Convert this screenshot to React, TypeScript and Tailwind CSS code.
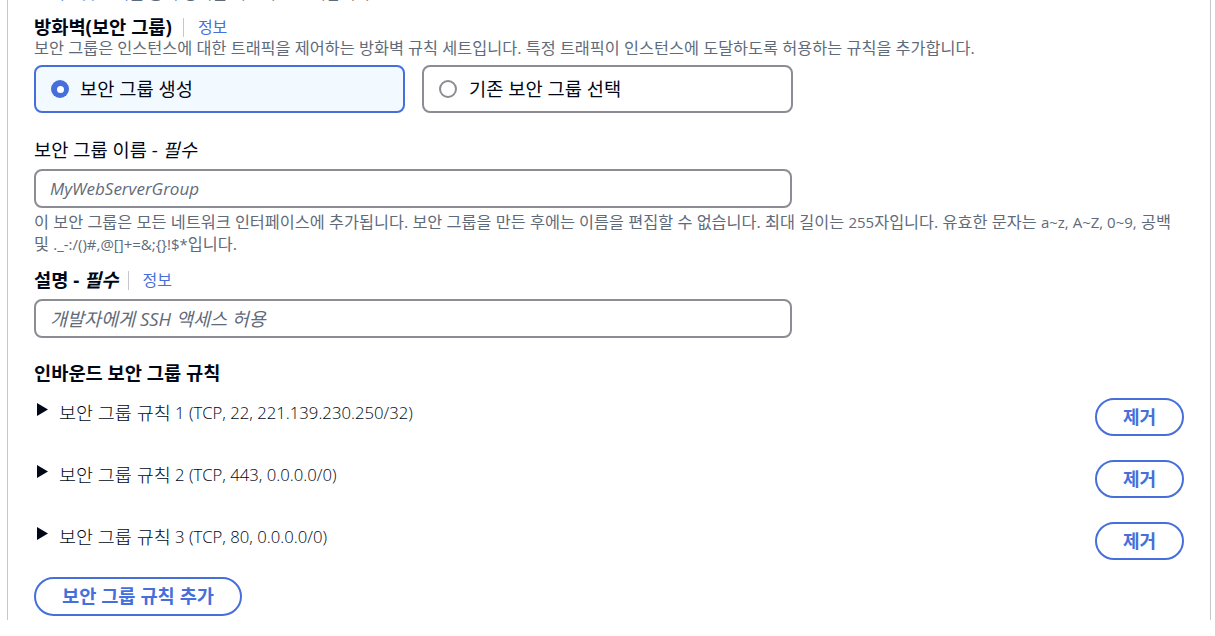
const font = { fontFamily: '"Open Sans", "Noto Sans CJK KR", sans-serif' };

const rules = [
  { n: '1', detail: '(TCP, 22, 221.139.230.250/32)' },
  { n: '2', detail: '(TCP, 443, 0.0.0.0/0)' },
  { n: '3', detail: '(TCP, 80, 0.0.0.0/0)' },
];

function InfoLink({ gap }: { gap: string }) {
  return (
    <>
      <span className={`${gap} mr-[14px] h-[19px] w-px bg-[#c6c6cd]`} />
      <a className="text-[16px] leading-[22px] text-[#466fdb]">정보</a>
    </>
  );
}

function Radio({ checked }: { checked: boolean }) {
  return checked ? (
    <span className="flex h-[18px] w-[18px] shrink-0 items-center justify-center rounded-full bg-[#466fdb]">
      <span className="h-[7px] w-[7px] rounded-full bg-white" />
    </span>
  ) : (
    <span className="h-[18px] w-[18px] shrink-0 rounded-full border-[2.5px] border-[#8c8c94] bg-white" />
  );
}

export default function App() {
  return (
    <div className="h-[636px] overflow-hidden bg-white text-[#000716]" style={font}>
      <div className="ml-[7px] mr-[4px] h-full border-x border-[#c6c6cd] px-[26px]">
        {/* 잘린 윗줄 */}
        <div className="-mt-[16px] h-[18px] whitespace-nowrap pl-[16px] text-[16.3px] leading-[18px] text-[#5f6b7a]">
          <span className="text-[#466fdb]">서브넷 보기</span>를 통해 영역을 확인하고 선택합니다.
        </div>

        {/* 방화벽 */}
        <div className="mt-[14px] flex items-center">
          <h3 className="text-[18.7px] font-bold leading-[22px]">방화벽(보안 그룹)</h3>
          <InfoLink gap="ml-[11px]" />
        </div>
        <p className="whitespace-nowrap text-[16.3px] leading-[20px] text-[#5f6b7a]">
          보안 그룹은 인스턴스에 대한 트래픽을 제어하는 방화벽 규칙 세트입니다. 특정 트래픽이 인스턴스에 도달하도록 허용하는 규칙을 추가합니다.
        </p>

        <div className="mt-[7px] flex gap-[17px]">
          <label className="flex h-[48px] w-[371px] items-center gap-[11px] rounded-lg border-2 border-[#466fdb] bg-[#f2f9ff] px-[15px] text-[18.7px]">
            <Radio checked />
            보안 그룹 생성
          </label>
          <label className="flex h-[48px] w-[371px] items-center gap-[12px] rounded-lg border-2 border-[#8c8c94] bg-white px-[15px] text-[18.7px]">
            <Radio checked={false} />
            기존 보안 그룹 선택
          </label>
        </div>

        {/* 보안 그룹 이름 */}
        <div className="mt-[25px] text-[18.7px] leading-[24px]">
          보안 그룹 이름 - <i>필수</i>
        </div>
        <input
          placeholder="MyWebServerGroup"
          className="mt-[7px] block h-[39px] w-[758px] rounded-lg border-2 border-[#8c8c94] px-[14px] text-[17px] italic placeholder:text-[#5f6b7a] focus:outline-none"
        />
        <div className="mt-[3px] text-[16.3px] leading-[22px] text-[#5f6b7a]">
          <div className="whitespace-nowrap">
            이 보안 그룹은 모든 네트워크 인터페이스에 추가됩니다. 보안 그룹을 만든 후에는 이름을 편집할 수 없습니다. 최대 길이는{' '}
            <span className="text-[15px]">255</span>자입니다. 유효한 문자는{' '}
            <span className="text-[15px]">a~z, A~Z, 0~9,</span> 공백
          </div>
          <div className="whitespace-nowrap">
            및 <span className="text-[15px]">._-:/()#,@[]+=&amp;;{'{}'}!$*</span>입니다.
          </div>
        </div>

        {/* 설명 */}
        <div className="mt-[13px] flex h-[24px] items-center">
          <span className="text-[18.7px] font-bold leading-[24px]">
            설명 - <i>필수</i>
          </span>
          <InfoLink gap="ml-[9px]" />
        </div>
        <input
          placeholder="개발자에게 SSH 액세스 허용"
          className="mt-[7px] block h-[39px] w-[758px] rounded-lg border-2 border-[#8c8c94] px-[14px] text-[18.5px] italic placeholder:text-[#5f6b7a] focus:outline-none"
        />

        {/* 인바운드 규칙 */}
        <h3 className="mt-[23px] text-[18.7px] font-bold leading-[24px]">인바운드 보안 그룹 규칙</h3>
        <div className="mt-[13px] flex flex-col gap-[24px]">
          {rules.map((r) => (
            <div key={r.n} className="flex h-[38px] items-start justify-between">
              <div className="flex items-start pt-[3px] font-light leading-[24px]">
                <svg width="11" height="13" viewBox="0 0 11 13" className="ml-[3px] mr-[11px] mt-[2px]">
                  <path d="M0 0 L11 6.5 L0 13 Z" fill="#000716" />
                </svg>
                <span className="text-[18.5px]">보안 그룹 규칙</span>
                <span className="whitespace-pre text-[16.7px]"> {r.n} {r.detail}</span>
              </div>
              <button className="h-[38px] w-[89px] rounded-full border-2 border-[#466fdb] text-[18px] font-bold text-[#466fdb]">
                제거
              </button>
            </div>
          ))}
        </div>

        <button className="mt-[17px] h-[39px] w-[208px] rounded-full border-2 border-[#466fdb] text-[18.7px] font-bold text-[#466fdb]">
          보안 그룹 규칙 추가
        </button>
      </div>
    </div>
  );
}
